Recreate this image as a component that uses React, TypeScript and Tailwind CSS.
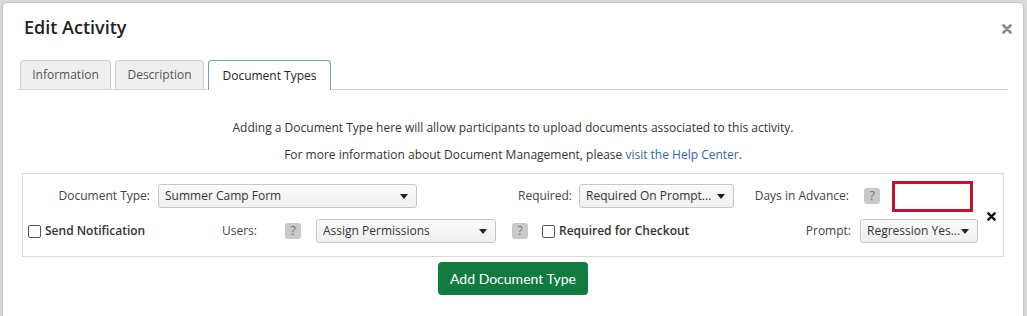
import React from 'react';

const font = { fontFamily: '"Open Sans", "Liberation Sans", sans-serif' };

function Caret() {
  return (
    <svg width="8" height="5" viewBox="0 0 8 5" className="shrink-0">
      <path d="M0 0 L8 0 L4 5 Z" fill="#222" />
    </svg>
  );
}

function FakeSelect({ value, className }: { value: string; className: string }) {
  return (
    <div
      className={`flex items-center justify-between h-[24px] pl-[6px] pr-[8px] rounded-[3px] border border-[#c6c6c6] bg-gradient-to-b from-[#fafafa] to-[#f0f0f0] text-[12px] text-[#333] ${className}`}
    >
      <span className="truncate">{value}</span>
      <Caret />
    </div>
  );
}

function Help() {
  return (
    <span className="flex items-center justify-center w-[16px] h-[16px] rounded-[3px] bg-[#c9c9c9] text-[12px] text-[#5879a3] leading-none shrink-0">
      ?
    </span>
  );
}

function Check() {
  return <span className="inline-block w-[13px] h-[13px] rounded-[2px] border border-[#555] bg-white shrink-0" />;
}

export default function App() {
  return (
    <div className="w-[1027px] h-[316px] bg-[#dcdcdc] pt-[2px] pl-[2px] overflow-hidden" style={font}>
      <div className="w-[1022px] h-[330px] bg-white rounded-[5px] border border-[#c4c4c4] shadow-sm">
        {/* Header */}
        <div className="flex items-center justify-between h-[48px] pl-[21px] pr-[11px]">
          <h1 className="text-[18px] font-semibold text-[#222]">Edit Activity</h1>
          <svg width="10" height="10" viewBox="0 0 10 10" className="mt-[4px]">
            <path d="M1.5 1.5 L8.5 8.5 M8.5 1.5 L1.5 8.5" stroke="#888" strokeWidth="2.6" strokeLinecap="round" />
          </svg>
        </div>

        {/* Tabs */}
        <div className="mx-[15px] mt-[9px] flex items-end gap-[4px] border-b border-[#d4d4d4] pl-[2px] h-[30px]">
          <div className="h-[29px] w-[91px] flex items-center justify-center rounded-t-[4px] border border-b-0 border-[#cfcfcf] bg-[#efefef] text-[12px] text-[#555]">
            Information
          </div>
          <div className="h-[29px] w-[89px] flex items-center justify-center rounded-t-[4px] border border-b-0 border-[#cfcfcf] bg-[#efefef] text-[12px] text-[#555]">
            Description
          </div>
          <div className="h-[30px] w-[123px] -mb-px flex items-center justify-center rounded-t-[4px] border border-b-0 border-[#6f9ec0] bg-white text-[12px] text-[#222]">
            Document Types
          </div>
        </div>

        {/* Intro text */}
        <div className="flex flex-col items-center text-[12px] text-[#333] pt-[29px] gap-[9px] leading-[18px]">
          <p>Adding a Document Type here will allow participants to upload documents associated to this activity.</p>
          <p>
            For more information about Document Management, please{' '}
            <span className="text-[#2c6aa0]">visit the Help Center</span>.
          </p>
        </div>

        {/* Document type panel */}
        <div className="mx-[19px] mt-[9px] h-[84px] border border-[#d9d9d9] flex items-start pt-[10px]">
          <div className="flex flex-col gap-[11px] w-[962px]">
            <div className="flex items-center h-[24px] text-[12px] text-[#444]">
              <span className="w-[135px] text-right pr-[8px] shrink-0">Document Type:</span>
              <FakeSelect value="Summer Camp Form" className="w-[259px]" />
              <span className="w-[162px] text-right pr-[7px] shrink-0">Required:</span>
              <FakeSelect value="Required On Prompt..." className="w-[155px]" />
              <span className="w-[115px] text-right pr-[15px] shrink-0 box-content">Days in Advance:</span>
              <Help />
              <div className="ml-[12px] w-[81px] h-[31px] self-start -mt-[3px] border-[3px] border-[#c8102e] bg-white" />
            </div>
            <div className="flex items-center h-[24px] text-[12px] text-[#444]">
              <div className="flex items-center gap-[4px] pl-[5px] w-[199px] shrink-0">
                <Check />
                <span className="text-[12px] font-semibold text-[#333]">Send Notification</span>
              </div>
              <span className="w-[63px] shrink-0">Users:</span>
              <Help />
              <FakeSelect value="Assign Permissions" className="w-[180px] ml-[15px]" />
              <span className="ml-[16px]"><Help /></span>
              <div className="flex items-center gap-[4px] ml-[14px] w-[318px] shrink-0">
                <Check />
                <span className="text-[12px] font-semibold text-[#333]">Required for Checkout</span>
              </div>
              <span className="w-[0px] flex justify-end pr-[9px] box-content -ml-[9px]">
                <span className="whitespace-nowrap">Prompt:</span>
              </span>
              <FakeSelect value="Regression Yes..." className="w-[118px]" />
            </div>
          </div>
          <svg width="9" height="9" viewBox="0 0 10 10" className="ml-[2px] mt-[28px]">
            <path d="M1.5 1.5 L8.5 8.5 M8.5 1.5 L1.5 8.5" stroke="#111" strokeWidth="2.6" strokeLinecap="round" />
          </svg>
        </div>

        {/* Add button */}
        <div className="flex justify-center mt-[5px]">
          <button
            className="w-[150px] h-[33px] rounded-[4px] bg-[#117a3f] text-white text-[14px]"
            style={{ fontFamily: 'Lato, "Liberation Sans", sans-serif' }}
          >
            Add Document Type
          </button>
        </div>
      </div>
    </div>
  );
}
